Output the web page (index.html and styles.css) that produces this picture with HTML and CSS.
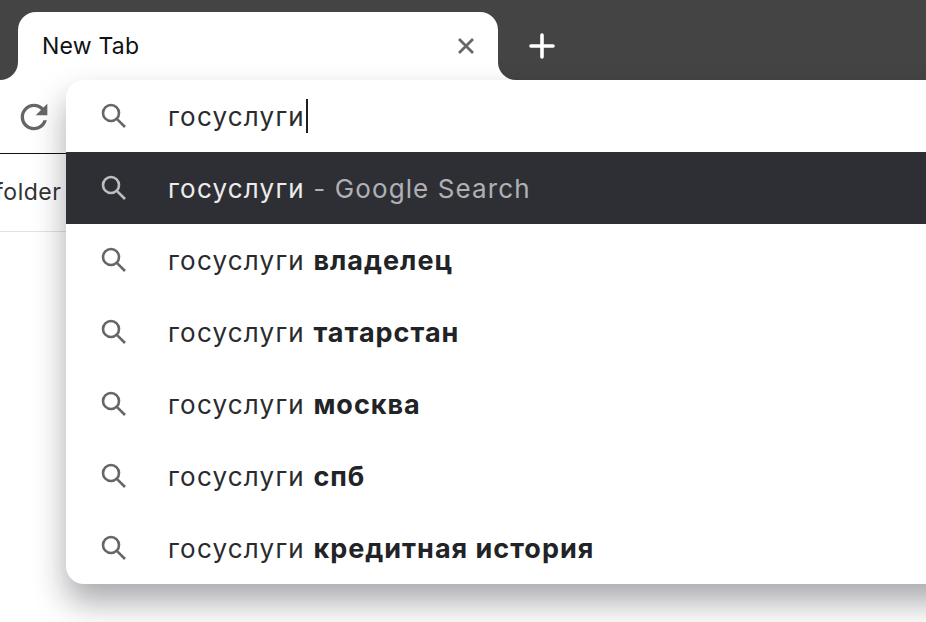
FILE: index.html
```html
<!DOCTYPE html>
<html lang="ru">
<head>
<meta charset="utf-8">
<title>New Tab</title>
<link rel="stylesheet" href="styles.css">
</head>
<body>
<div class="window">
  <div class="tabstrip">
    <div class="edge"></div>
    <div class="tab-slot">
      <div class="tab">
        <span class="tab-title">New Tab</span>
        <svg class="close" viewBox="0 0 20 20"><path d="M3 3L17 17M17 3L3 17"/></svg>
      </div>
    </div>
    <div class="rest">
      <svg class="plus" viewBox="0 0 28 28"><path d="M14 3V25M3 14H25"/></svg>
    </div>
  </div>
  <div class="toolbar">
    <svg class="reload" viewBox="0 0 24 24"><path d="M17.65 6.35C16.2 4.9 14.21 4 12 4c-4.42 0-7.99 3.58-7.99 8s3.57 8 7.99 8c3.73 0 6.84-2.55 7.73-6h-2.08c-.82 2.33-3.04 4-5.65 4-3.31 0-6-2.69-6-6s2.69-6 6-6c1.66 0 3.14.69 4.22 1.78L13 11h7V4l-2.35 2.35z"/></svg>
  </div>
  <div class="bookmarks"><span class="bookmark">folder</span></div>

  <div class="omnibox">
    <div class="row">
      <svg class="search" viewBox="0 0 26 26"><circle cx="10" cy="10" r="8"/><path d="M15.8 15.8L24 24"/></svg>
      <span class="text">госуслуги</span><span class="caret"></span>
    </div>
    <div class="row selected">
      <svg class="search" viewBox="0 0 26 26"><circle cx="10" cy="10" r="8"/><path d="M15.8 15.8L24 24"/></svg>
      <span class="text">госуслуги<span class="hint"> - Google Search</span></span>
    </div>
    <div class="row">
      <svg class="search" viewBox="0 0 26 26"><circle cx="10" cy="10" r="8"/><path d="M15.8 15.8L24 24"/></svg>
      <span class="text">госуслуги <b>владелец</b></span>
    </div>
    <div class="row">
      <svg class="search" viewBox="0 0 26 26"><circle cx="10" cy="10" r="8"/><path d="M15.8 15.8L24 24"/></svg>
      <span class="text">госуслуги <b>татарстан</b></span>
    </div>
    <div class="row">
      <svg class="search" viewBox="0 0 26 26"><circle cx="10" cy="10" r="8"/><path d="M15.8 15.8L24 24"/></svg>
      <span class="text">госуслуги <b>москва</b></span>
    </div>
    <div class="row">
      <svg class="search" viewBox="0 0 26 26"><circle cx="10" cy="10" r="8"/><path d="M15.8 15.8L24 24"/></svg>
      <span class="text">госуслуги <b>спб</b></span>
    </div>
    <div class="row">
      <svg class="search" viewBox="0 0 26 26"><circle cx="10" cy="10" r="8"/><path d="M15.8 15.8L24 24"/></svg>
      <span class="text">госуслуги <b>кредитная история</b></span>
    </div>
  </div>
</div>
</body>
</html>
```
FILE: styles.css
```css
* { box-sizing: border-box; }
html, body { margin: 0; height: 100%; background: #fff; overflow: hidden; }
body { font-family: Inter, "Noto Sans", sans-serif; color: #222326; }

.window { position: relative; width: 926px; height: 622px; overflow: hidden; }

.tabstrip { display: flex; height: 80px; background: #fff; }
.edge { width: 18px; background: #444; border-bottom-right-radius: 18px; }
.tab-slot { width: 480px; padding-top: 12px; background: #444; }
.tab {
  display: flex; align-items: center; justify-content: space-between;
  height: 68px; padding: 0 22px 0 24px; background: #fff;
  border-radius: 18px 18px 0 0;
}
.tab-title { font-size: 23px; letter-spacing: 0.2px; color: #111; }
.close { width: 20px; height: 20px; }
.close path { fill: none; stroke: #666; stroke-width: 2.8; }
.rest { flex: 1; display: flex; align-items: flex-start; padding: 32px 0 0 30px; background: #444; border-bottom-left-radius: 18px; }
.plus { width: 28px; height: 28px; }
.plus path { fill: none; stroke: #fff; stroke-width: 3.6; stroke-linecap: round; }

.toolbar { display: flex; align-items: center; height: 74px; padding-left: 14px; border-bottom: 1px solid #111; }
.reload { width: 40px; height: 40px; fill: #666; }

.bookmarks { display: flex; align-items: center; width: 100%; height: 78px; padding-bottom: 2px; border-bottom: 1px solid #e2e2e2; }
.bookmark { font-size: 23px; letter-spacing: 0.5px; color: #333; margin-left: -5px; white-space: nowrap; }

.omnibox {
  position: absolute; left: 66px; top: 80px; width: 900px; height: 504px;
  background: #fff; border-radius: 18px; overflow: visible;
  box-shadow: 0 18px 32px rgba(20, 20, 30, 0.36);
}
.row { display: flex; align-items: center; height: 72px; padding-left: 35px; }
.row:first-child { border-radius: 18px 18px 0 0; }
.row:last-child { border-radius: 0 0 18px 18px; }
.search { width: 26px; height: 26px; margin-right: 41px; flex: none; }
.search circle, .search path { fill: none; stroke: #666; stroke-width: 2.6; }
.text { font-size: 26px; letter-spacing: 1.2px; color: #2a2b2e; white-space: pre; }
.text b { font-size: 27px; font-weight: 700; letter-spacing: 1px; color: #222326; }
.caret { width: 2px; height: 34px; margin-left: 1px; background: #1d1d22; }
.selected { background: #2e2f34; }
.selected .text { color: #ececec; }
.selected .hint { letter-spacing: 1.1px; color: #b0b1b4; }
.selected .search circle, .selected .search path { stroke: #bdbdbd; }
```
